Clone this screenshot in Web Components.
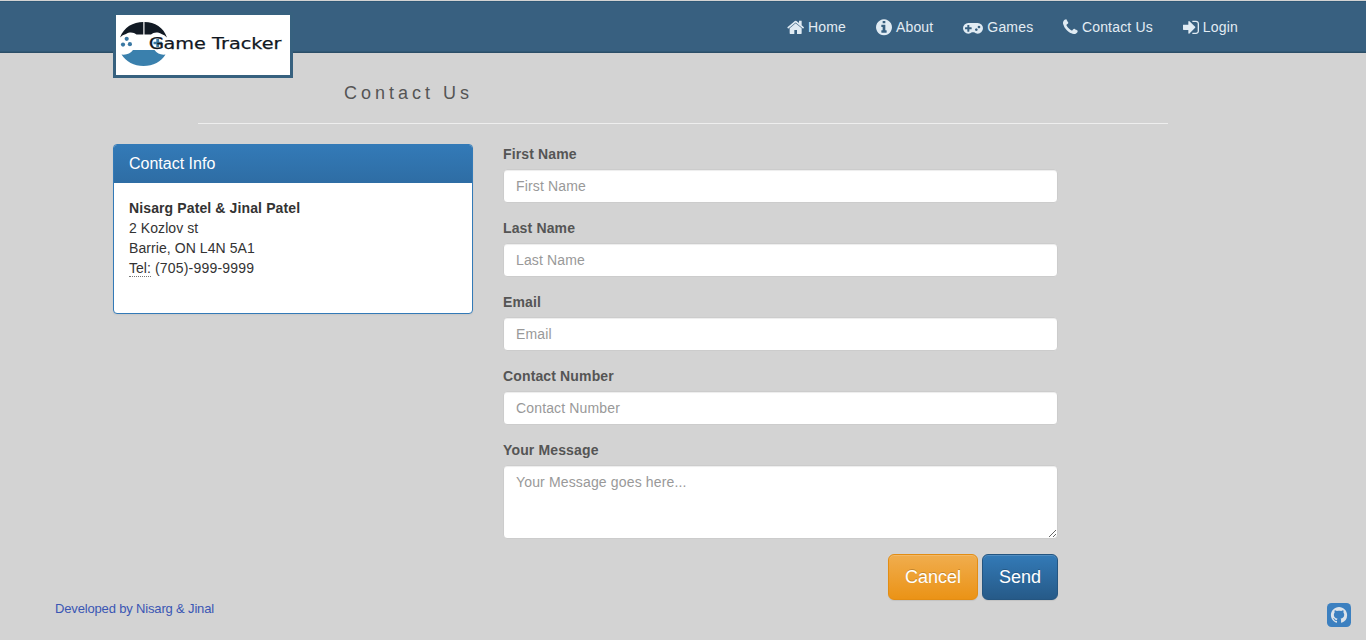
<!DOCTYPE html>
<html lang="en">
<head>
<meta charset="utf-8">
<title>Contact Us</title>
<style>
html,body{margin:0;height:100%}
body{background:#d3d3d3;font:14px/20px "Liberation Sans",Arial,sans-serif;color:#333;overflow:hidden}
</style>
</head>
<body>
<contact-page></contact-page>
<script>
const icons = {
  home:['64 0 1664 1792','M1472 992v480q0 26-19 45t-45 19h-384v-384h-256v384h-384q-26 0-45-19t-19-45v-480q0-1 .5-3t.5-3l575-474 575 474q1 2 1 6zm223-69l-62 74q-8 9-21 11h-3q-13 0-21-7l-692-577-692 577q-12 8-24 7-13-2-21-11l-62-74q-8-10-7-23.5t11-21.5l719-599q32-26 76-26t76 26l244 204v-195q0-14 9-23t23-9h192q14 0 23 9t9 23v408l219 182q10 8 11 21.5t-7 23.5z'],
  info:['128 0 1536 1792','M1152 1376v-160q0-14-9-23t-23-9h-96v-512q0-14-9-23t-23-9h-320q-14 0-23 9t-9 23v160q0 14 9 23t23 9h96v320h-96q-14 0-23 9t-9 23v160q0 14 9 23t23 9h448q14 0 23-9t9-23zm-128-896v-160q0-14-9-23t-23-9h-192q-14 0-23 9t-9 23v160q0 14 9 23t23 9h192q14 0 23-9t9-23zm640 416q0 209-103 385.5t-279.5 279.5-385.5 103-385.5-103-279.5-279.5-103-385.5 103-385.5 279.5-279.5 385.5-103 385.5 103 279.5 279.5 103 385.5z'],
  gamepad:['0 30 1920 1792','M832 1088v-128q0-14-9-23t-23-9h-192v-192q0-14-9-23t-23-9h-128q-14 0-23 9t-9 23v192h-192q-14 0-23 9t-9 23v128q0 14 9 23t23 9h192v192q0 14 9 23t23 9h128q14 0 23-9t9-23v-192h192q14 0 23-9t9-23zm576 64q0-53-37.5-90.5t-90.5-37.5-90.5 37.5-37.5 90.5 37.5 90.5 90.5 37.5 90.5-37.5 37.5-90.5zm256-256q0-53-37.5-90.5t-90.5-37.5-90.5 37.5-37.5 90.5 37.5 90.5 90.5 37.5 90.5-37.5 37.5-90.5zm256 128q0 212-150 362t-362 150q-192 0-338-128h-220q-146 128-338 128-212 0-362-150t-150-362 150-362 362-150h896q212 0 362 150t150 362z'],
  phone:['192 0 1408 1792','M1600 1240q0 27-10 70.5t-21 68.5q-21 50-122 106-94 51-186 51-27 0-53-3.5t-57.5-12.5-47-14.5-55.5-20.5-49-18q-98-35-175-83-127-79-264-216t-216-264q-48-77-83-175-3-9-18-49t-20.5-55.5-14.5-47-12.5-57.5-3.5-53q0-92 51-186 56-101 106-122 25-11 68.5-21t70.5-10q14 0 21 3 18 6 53 76 11 19 30 54t35 63.5 31 53.5q3 4 17.5 25t21.5 35.5 7 28.5q0 20-28.5 50t-62 55-62 53-28.5 46q0 9 5 22.5t8.5 20.5 14 24 11.5 19q76 137 174 235t235 174q2 1 19 11.5t24 14 20.5 8.5 22.5 5q18 0 46-28.5t53-62 55-62 50-28.5q14 0 28.5 7t35.5 21.5 25 17.5q25 15 53.5 31t63.5 35 54 30q70 35 76 53 3 7 3 21z'],
  login:['128 0 1536 1792','M1312 896q0 26-19 45l-544 544q-19 19-45 19t-45-19-19-45v-288h-448q-26 0-45-19t-19-45v-384q0-26 19-45t45-19h448v-288q0-26 19-45t45-19 45 19l544 544q19 19 19 45zm352-352v704q0 119-84.5 203.5t-203.5 84.5h-320q-13 0-22.5-9.5t-9.5-22.5q0-4-1-20t-.5-26.5 3-23.5 10-19.5 20.5-6.5h320q66 0 113-47t47-113v-704q0-66-47-113t-113-47h-312l-11.5-1-11.5-3-8-5.5-7-9-2-13.5q0-4-1-20t-.5-26.5 3-23.5 10-19.5 20.5-6.5h320q119 0 203.5 84.5t84.5 203.5z']
};
function define(name, render){
  customElements.define(name, class extends HTMLElement{
    connectedCallback(){
      if(this.shadowRoot) return;
      const t=document.createElement('template');
      t.innerHTML=render(this);
      this.attachShadow({mode:'open'}).append(t.content.cloneNode(true));
    }
  });
}
define('nav-item', el=>{
  const [box,path]=icons[el.getAttribute('icon')];
  return `<style>
:host{display:block}
a{display:flex;align-items:center;padding:0 15px;gap:3.9px;color:#e3ecf3;height:20px;text-decoration:none}
svg{height:18.67px;width:${box.split(' ')[2]/96}px;fill:#e0ebf3;flex:none}
</style><a href="#"><svg viewBox="${box}"><path d="${path}"/></svg><span><slot></slot></span></a>`;
});
define('brand-logo', ()=>`<style>
:host{display:block;box-sizing:border-box;width:180px;height:66px;border:3px solid #37617f;background:#fff}
svg{display:block}
text{font:16.5px "DejaVu Sans",sans-serif;fill:#10171f;stroke:#10171f;stroke-width:.25}
</style><svg width="174" height="60" viewBox="116 15 174 60">
<path d="M120 37.500C124 27 133 22 143.300 22V34.500H136.500C134 32.500 130 31.500 126 34Q122.500 34.500 120 37.500Z" fill="#121a24"/>
<path d="M144.500 22C155 22 163.500 27.500 167 37.500Q164.500 34.500 161.500 34C157 31.500 153.500 32.500 151 34.500H144.500Z" fill="#121a24"/>
<path d="M121.500 54.500Q129 55.500 133 50H154.500Q158.500 55.500 165.500 54.500C161.500 61.500 153 66 143.500 66C134 66 126 61.500 121.500 54.500Z" fill="#3a80ad"/>
<g fill="#3a78a3"><circle cx="126.700" cy="38.800" r="2.100"/><circle cx="123" cy="44.600" r="2.100"/><circle cx="129.900" cy="44.200" r="2.100"/><path d="M156.300 39h2.800v2.700h2.900v2.600h-2.900V47h-2.800v-2.700h-2.800v-2.600h2.800z"/></g>
<text y="49"><tspan x="148.800" textLength="15.500" lengthAdjust="spacingAndGlyphs">G</tspan><tspan x="163.500" textLength="118" lengthAdjust="spacingAndGlyphs">ame Tracker</tspan></text></svg>`);
define('site-header', ()=>`<style>
:host{display:block;box-sizing:border-box;height:53px;border-top:1px solid #d3d3d3;background:linear-gradient(#2f5876 0 1px,#386080 1px 50px,#315874 50px 51px,#2b4e68 51px)}
.wrap{width:1140px;margin:0 auto;display:flex;justify-content:space-between;align-items:flex-start}
brand-logo{margin-top:11px;flex:none;position:relative;z-index:1}
nav{display:flex;margin-top:16px;letter-spacing:.18px}
</style><div class="wrap"><brand-logo></brand-logo><nav>
<nav-item icon="home">Home</nav-item><nav-item icon="info">About</nav-item><nav-item icon="gamepad">Games</nav-item><nav-item icon="phone">Contact Us</nav-item><nav-item icon="login">Login</nav-item></nav></div>`);
define('info-panel', el=>`<style>
:host{display:block;box-sizing:border-box;width:360px;height:170px;border:1px solid #337ab7;border-radius:4px;background:#fff;box-shadow:0 1px 2px rgba(0,0,0,.05);overflow:hidden}
h3{margin:0;padding:10px 15px;font-size:16px;line-height:18px;font-weight:400;color:#fff;background:linear-gradient(#337ab7,#2e6da4)}
.body{padding:15px}
</style><h3>${el.getAttribute('heading')}</h3><div class="body"><slot></slot></div>`);
define('form-field', el=>{
  const attrs=`aria-label="${el.getAttribute('label')}" placeholder="${el.getAttribute('hint')}"`;
  return `<style>
:host{display:block;margin-bottom:15px}
label{display:block;font-weight:700;color:#555;margin-bottom:5px;letter-spacing:.14px}
input,textarea{display:block;box-sizing:border-box;width:100%;height:34px;margin:0;padding:6px 12px;border:1px solid #ccc;border-radius:4px;background:#fff;font:inherit;letter-spacing:.15px;box-shadow:inset 0 1px 1px rgba(0,0,0,.075);outline:0}
textarea{height:74px;overflow:auto}
::placeholder{color:#999;opacity:1}
</style><label>${el.getAttribute('label')}</label>${el.hasAttribute('multiline')?`<textarea ${attrs}></textarea>`:`<input ${attrs}>`}`;
});
define('action-button', el=>`<style>
:host{display:block}
button{box-sizing:border-box;display:block;height:46px;padding:10px 16px;border-radius:6px;font:18px/24px "Liberation Sans",Arial,sans-serif;color:#fff;text-shadow:0 -1px 0 rgba(0,0,0,.2);box-shadow:inset 0 1px 0 rgba(255,255,255,.15),0 1px 1px rgba(0,0,0,.075);border:1px solid #245580;background:linear-gradient(#337ab7,#265a88)}
:host([kind=warning]) button{border-color:#e38d13;background:linear-gradient(#f0ad4e,#eb9316)}
</style><button type="button"><slot></slot></button>`);
define('site-footer', ()=>`<style>
:host{display:flex;justify-content:space-between;align-items:flex-start;padding:0 15px 0 55px;font-size:13px;line-height:18px;color:#3a56b4}
span{margin-top:-3px;letter-spacing:-.16px}
svg{display:block}
</style><span>Developed by Nisarg &amp; Jinal</span><svg width="24" height="24" viewBox="0 0 24 24"><rect width="24" height="24" rx="4.500" fill="#3c80c0"/><path transform="translate(3.900 3.900) scale(1.015)" fill="#dce3ea" d="M8 0C3.580 0 0 3.580 0 8c0 3.540 2.290 6.530 5.470 7.590.4.070.55-.17.55-.38 0-.19-.01-.82-.01-1.490-2.010.37-2.530-.49-2.690-.94-.09-.23-.48-.94-.82-1.130-.28-.15-.68-.52-.01-.53.63-.01 1.080.58 1.230.82.72 1.210 1.870.87 2.330.66.070-.52.280-.87.510-1.070-1.780-.2-3.640-.89-3.640-3.950 0-.87.310-1.590.820-2.150-.08-.2-.36-1.020.080-2.120 0 0 .67-.21 2.200.82.640-.18 1.320-.27 2-.27.680 0 1.360.090 2 .27 1.530-1.040 2.200-.82 2.200-.82.440 1.100.160 1.920.080 2.120.510.560.820 1.270.820 2.150 0 3.070-1.870 3.750-3.650 3.950.290.250.540.730.540 1.480 0 1.070-.01 1.930-.01 2.200 0 .210.150.460.550.380A8.013 8.013 0 0016 8c0-4.420-3.580-8-8-8z"/></svg>`);
define('contact-page', ()=>`<style>
:host{display:block;height:640px}
h1{margin:30px 0 20px 344px;font-size:18px;line-height:20px;font-weight:400;letter-spacing:4px;color:#555}
hr{width:970px;height:1px;margin:0 0 20px 198px;border:0;background:#eee}
main{width:1140px;margin:0 auto;display:flex;align-items:flex-start;gap:30px}
strong{letter-spacing:.12px}
.lines{letter-spacing:.07px}
.phone{letter-spacing:.2px}
form{width:555px}
.actions{display:flex;justify-content:flex-end;gap:4px}
abbr{text-decoration:none;border-bottom:1px dotted #777}
site-footer{margin-top:3px}
</style><site-header></site-header><h1>Contact Us</h1><hr><main>
<info-panel heading="Contact Info"><strong>Nisarg Patel &amp; Jinal Patel</strong><br><span class="lines">2 Kozlov st<br>Barrie, ON L4N 5A1</span><br><abbr title="Phone">Tel:</abbr><span class="phone"> (705)-999-9999</span></info-panel>
<form><form-field label="First Name" hint="First Name"></form-field><form-field label="Last Name" hint="Last Name"></form-field><form-field label="Email" hint="Email"></form-field><form-field label="Contact Number" hint="Contact Number"></form-field><form-field label="Your Message" hint="Your Message goes here..." multiline></form-field>
<div class="actions"><action-button kind="warning">Cancel</action-button><action-button>Send</action-button></div></form></main><site-footer></site-footer>`);
</script>
</body>
</html>
